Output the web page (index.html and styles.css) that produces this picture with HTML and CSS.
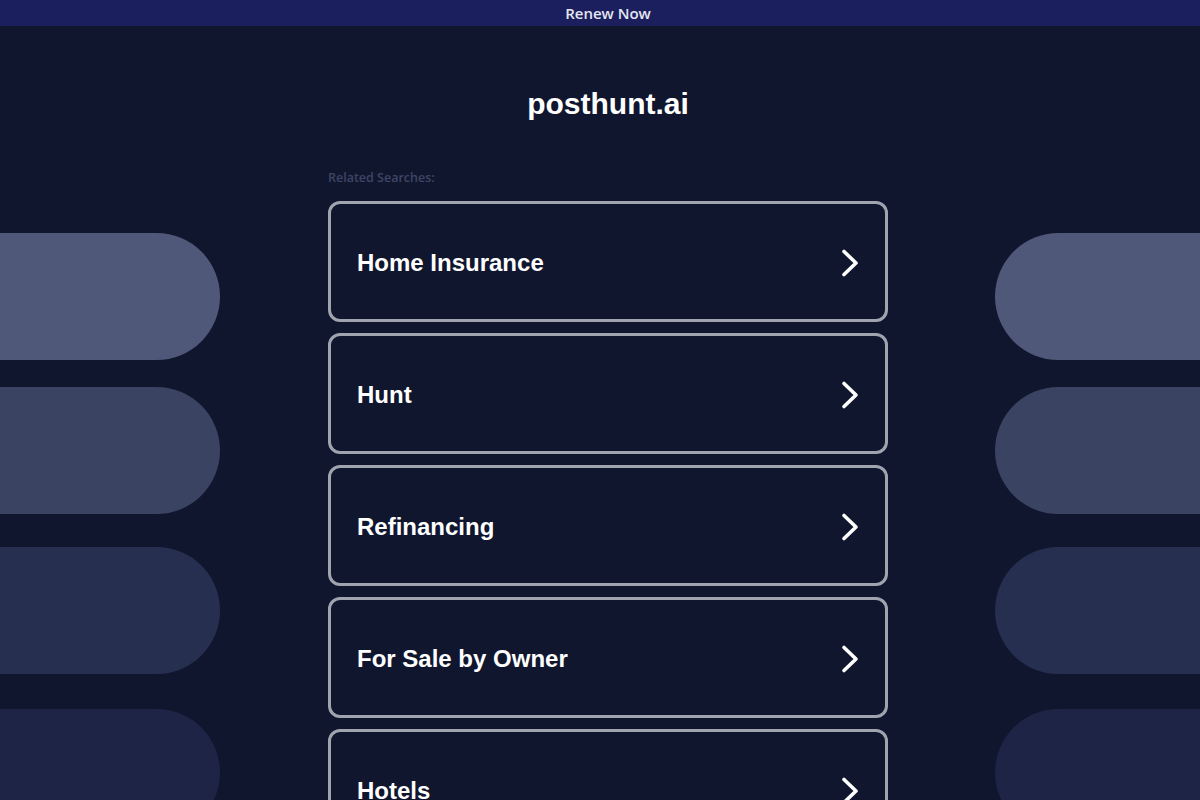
FILE: index.html
```html
<!DOCTYPE html>
<html lang="en">
<head>
<meta charset="utf-8">
<title>posthunt.ai</title>
<link rel="stylesheet" href="styles.css">
</head>
<body>
<div class="banner">Renew Now</div>
<div class="page">
  <div class="side side-left">
    <div class="pill p1"></div>
    <div class="pill p2"></div>
    <div class="pill p3"></div>
    <div class="pill p4"></div>
  </div>
  <main class="center">
    <h1 class="title">posthunt.ai</h1>
    <div class="related">Related Searches:</div>
    <div class="cards">
      <a class="card" href="#"><span class="label">Home Insurance</span><svg class="chev" width="20" height="30" viewBox="0 0 20 30"><path d="M4 3.5 L16 15 L4 26.5" fill="none" stroke="#fff" stroke-width="3.6" stroke-linecap="round" stroke-linejoin="round"/></svg></a>
      <a class="card" href="#"><span class="label">Hunt</span><svg class="chev" width="20" height="30" viewBox="0 0 20 30"><path d="M4 3.5 L16 15 L4 26.5" fill="none" stroke="#fff" stroke-width="3.6" stroke-linecap="round" stroke-linejoin="round"/></svg></a>
      <a class="card" href="#"><span class="label">Refinancing</span><svg class="chev" width="20" height="30" viewBox="0 0 20 30"><path d="M4 3.5 L16 15 L4 26.5" fill="none" stroke="#fff" stroke-width="3.6" stroke-linecap="round" stroke-linejoin="round"/></svg></a>
      <a class="card" href="#"><span class="label">For Sale by Owner</span><svg class="chev" width="20" height="30" viewBox="0 0 20 30"><path d="M4 3.5 L16 15 L4 26.5" fill="none" stroke="#fff" stroke-width="3.6" stroke-linecap="round" stroke-linejoin="round"/></svg></a>
      <a class="card" href="#"><span class="label">Hotels</span><svg class="chev" width="20" height="30" viewBox="0 0 20 30"><path d="M4 3.5 L16 15 L4 26.5" fill="none" stroke="#fff" stroke-width="3.6" stroke-linecap="round" stroke-linejoin="round"/></svg></a>
    </div>
  </main>
  <div class="side side-right">
    <div class="pill p1"></div>
    <div class="pill p2"></div>
    <div class="pill p3"></div>
    <div class="pill p4"></div>
  </div>
</div>
</body>
</html>
```

FILE: styles.css
```css
html, body {
  margin: 0;
  padding: 0;
  height: 100%;
  overflow: hidden;
}
body {
  background: #11162f;
  font-family: "Liberation Sans", Arial, sans-serif;
  color: #fff;
}
.banner {
  height: 26px;
  background: #1b1f5d;
  color: #e4e6f2;
  font-family: "Open Sans", sans-serif;
  font-weight: 600;
  font-size: 15px;
  line-height: 26px;
  text-align: center;
  padding-left: 16px;
}
.page {
  display: flex;
  align-items: flex-start;
}
.side {
  display: flex;
  flex-direction: column;
  padding-top: 207px;
}
.side-left {
  width: 220px;
}
.side-right {
  width: 205px;
  margin-left: 107px;
}
.center {
  width: 560px;
  margin-left: 108px;
  display: flex;
  flex-direction: column;
}
.pill {
  height: 127px;
  flex: none;
}
.side-left .pill {
  border-radius: 0 64px 64px 0;
}
.side-right .pill {
  border-radius: 64px 0 0 64px;
}
.p1 { background: #4f5878; }
.p2 { background: #3b4363; margin-top: 27px; }
.p3 { background: #272f50; margin-top: 33px; }
.p4 { background: #1d2445; margin-top: 35px; }
.title {
  margin: 62px 0 0;
  font-size: 30px;
  line-height: 32px;
  font-weight: 700;
  text-align: center;
  color: #fff;
}
.related {
  margin-top: 50px;
  font-family: "Open Sans", sans-serif;
  font-weight: 600;
  font-size: 12.5px;
  line-height: 16px;
  color: #3e4564;
}
.cards {
  margin-top: 15px;
  display: flex;
  flex-direction: column;
  gap: 11px;
}
.card {
  box-sizing: border-box;
  height: 121px;
  border: 3px solid #a0a4ae;
  border-radius: 12px;
  padding: 2px 26px 0;
  display: flex;
  align-items: center;
  justify-content: space-between;
  text-decoration: none;
  color: #fff;
  background: #11162f;
}
.label {
  font-size: 24px;
  font-weight: 700;
}
.chev {
  display: block;
  margin-right: -1px;
}
```
